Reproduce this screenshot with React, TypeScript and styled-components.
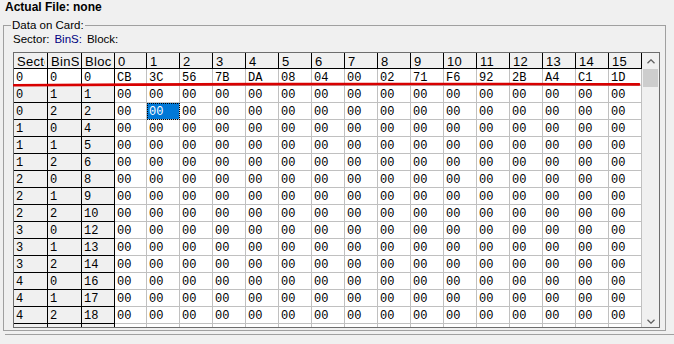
import React from 'react';
import styled, { createGlobalStyle } from 'styled-components';

const GlobalStyle = createGlobalStyle`
  html, body {
    margin: 0;
    padding: 0;
    background: #f0f0f0;
    overflow: hidden;
  }
  body {
    font-family: "Liberation Sans", Arial, sans-serif;
    color: #000;
  }
`;

const COL_WIDTHS = [34, 34, 33, 32, ...Array(15).fill(33)];
const TEMPLATE = COL_WIDTHS.map((w) => `${w}px`).join(' ');

const HEADERS = ['Sector', 'BinSector', 'Block', ...Array.from({ length: 16 }, (_, i) => String(i))];

const FIRST_ROW = ['CB', '3C', '56', '7B', 'DA', '08', '04', '00', '02', '71', 'F6', '92', '2B', 'A4', 'C1', '1D'];

const ROWS: number[][] = [
  [0, 0, 0],
  [0, 1, 1],
  [0, 2, 2],
  [1, 0, 4],
  [1, 1, 5],
  [1, 2, 6],
  [2, 0, 8],
  [2, 1, 9],
  [2, 2, 10],
  [3, 0, 12],
  [3, 1, 13],
  [3, 2, 14],
  [4, 0, 16],
  [4, 1, 17],
  [4, 2, 18],
  [5, 0, 20],
];

const SELECTED = { row: 2, col: 1 };

const Chevron = ({ down = false }: { down?: boolean }) => (
  <svg width="8" height="5" viewBox="0 0 8 5">
    <path
      d={down ? 'M0.5 0.8 L4 4.2 L7.5 0.8' : 'M0.5 4.2 L4 0.8 L7.5 4.2'}
      fill="none"
      stroke="#606060"
      strokeWidth="1.3"
    />
  </svg>
);

const App: React.FC = () => {
  return (
    <>
      <GlobalStyle />
      <Title>Actual File: none</Title>
      <Group>
        <Legend>Data on Card:</Legend>
        <InfoLine>
          <span>Sector:</span>
          <Value>BinS:</Value>
          <span>Block:</span>
        </InfoLine>
        <GridFrame>
          <Viewport>
            <Row $header>
              {HEADERS.map((h) => (
                <Cell key={h} $header>
                  <Label>{h}</Label>
                </Cell>
              ))}
            </Row>
            {ROWS.map((r, ri) => (
              <Row key={ri}>
                {r.map((v, ci) => (
                  <Cell key={ci} $fixed $plain={ri === 0}>
                    {v}
                  </Cell>
                ))}
                {Array.from({ length: 16 }, (_, ci) => (
                  <Cell key={`d${ci}`} $selected={ri === SELECTED.row && ci === SELECTED.col}>
                    {ri === 0 ? FIRST_ROW[ci] : '00'}
                  </Cell>
                ))}
              </Row>
            ))}
          </Viewport>
          <ScrollBar>
            <ScrollButton>
              <Chevron />
            </ScrollButton>
            <Thumb />
            <ScrollTrack />
            <ScrollButton $down>
              <Chevron down />
            </ScrollButton>
          </ScrollBar>
          <Marker width="630" height="8" viewBox="0 0 630 8">
            <path d="M1 5.2 Q 315 3.2 626 4.4" fill="none" stroke="#d80000" strokeWidth="2.6" strokeLinecap="round" />
          </Marker>
        </GridFrame>
      </Group>
      <Footer />
    </>
  );
};

export default App;

const Title = styled.div`
  height: 15px;
  padding-left: 5px;
  font-size: 12px;
  line-height: 15px;
  font-weight: 700;
`;

const Group = styled.fieldset`
  margin: 4px 8px 0 3px;
  padding: 1px 4px 2px 9px;
  border: 1px solid #a0a0a0;
  min-width: 0;
`;

const Legend = styled.legend`
  margin-left: -2px;
  padding: 0 1px;
  font-size: 11.5px;
  line-height: 13px;
`;

const InfoLine = styled.div`
  display: flex;
  gap: 5px;
  height: 13px;
  margin-bottom: 6px;
  font-size: 11.5px;
  line-height: 13px;
`;

const Value = styled.span`
  color: #000080;
`;

const GridFrame = styled.div`
  position: relative;
  display: flex;
  width: 645px;
  height: 274px;
  border: 1px solid #6d6d6d;
  background: #fff;
`;

const Viewport = styled.div`
  width: 628px;
  height: 274px;
  overflow: hidden;
`;

const Row = styled.div<{ $header?: boolean }>`
  display: grid;
  grid-template-columns: ${TEMPLATE};
  height: ${({ $header }) => ($header ? 16 : 17)}px;
`;

const Cell = styled.div<{ $header?: boolean; $fixed?: boolean; $plain?: boolean; $selected?: boolean }>`
  box-sizing: border-box;
  overflow: hidden;
  white-space: nowrap;
  padding: ${({ $header }) => ($header ? '1px 2px 0 3px' : '2px 0 0 2px')};
  border-right: 1px solid ${({ $header, $fixed }) => ($header || $fixed ? '#000' : '#c0c0c0')};
  border-bottom: 1px solid ${({ $header, $fixed }) => ($header || $fixed ? '#000' : '#c0c0c0')};
  font-family: ${({ $header }) =>
    $header ? '"Liberation Sans", Arial, sans-serif' : '"Liberation Mono", "Courier New", monospace'};
  font-size: ${({ $header }) => ($header ? 13 : 12)}px;
  letter-spacing: ${({ $header }) => ($header ? '0.3px' : '0')};
  line-height: 15px;
  color: ${({ $selected }) => ($selected ? '#fff' : '#000')};
  background: ${({ $header, $fixed, $plain, $selected }) =>
    $selected ? '#0078d7' : ($header || $fixed) && !$plain ? '#f0f0f0' : '#fff'};
  outline: ${({ $selected }) => ($selected ? '1px dotted #000' : 'none')};
  outline-offset: -1px;
`;

const Label = styled.span`
  display: block;
  overflow: hidden;
  white-space: nowrap;
`;

const ScrollBar = styled.div`
  display: flex;
  flex-direction: column;
  width: 17px;
  background: #f0f0f0;
`;

const ScrollButton = styled.div<{ $down?: boolean }>`
  display: flex;
  justify-content: center;
  align-items: ${({ $down }) => ($down ? 'flex-end' : 'center')};
  height: 16px;
  padding-bottom: ${({ $down }) => ($down ? '3px' : '0')};
  box-sizing: border-box;
`;

const Thumb = styled.div`
  height: 18px;
  margin: 0 1px;
  background: #cdcdcd;
`;

const ScrollTrack = styled.div`
  flex: 1;
`;

const Marker = styled.svg`
  position: absolute;
  left: -1px;
  top: 27px;
  pointer-events: none;
`;

const Footer = styled.div`
  margin: 3px 0 0 5px;
  border-top: 1px solid #a0a0a0;
  height: 10px;
`;
